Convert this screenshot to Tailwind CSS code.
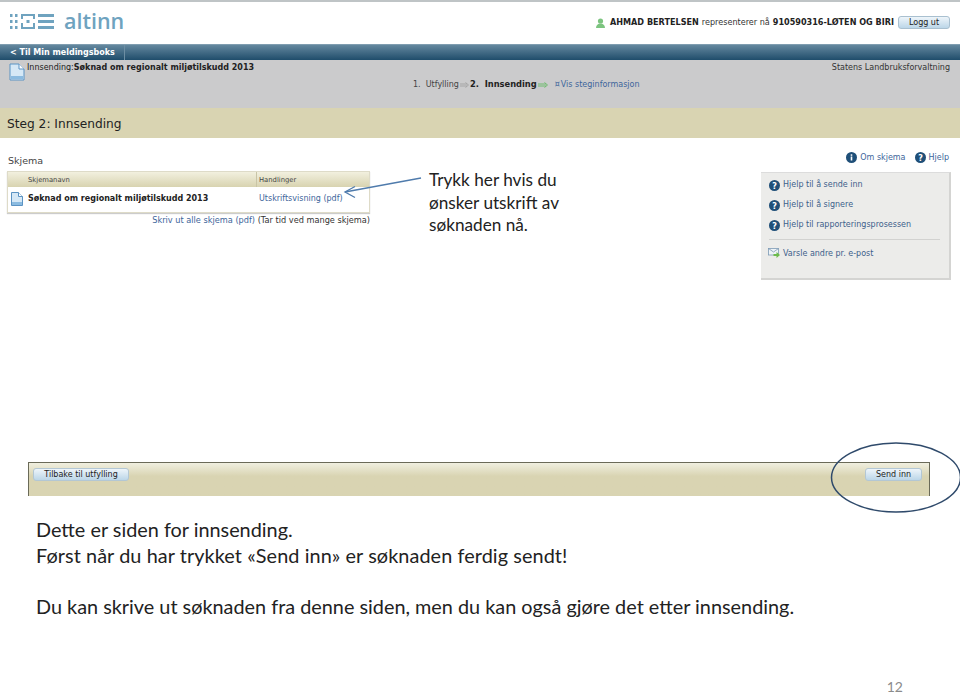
<!DOCTYPE html>
<html lang="no">
<head>
<meta charset="UTF-8">
<title>Innsending - Altinn</title>
<script src="https://cdn.jsdelivr.net/npm/@tailwindcss/browser@4"></script>
</head>
<body class="bg-white">
<div class="relative w-[960px] h-[694px] overflow-hidden bg-white font-['DejaVu_Sans',sans-serif] text-[#222]">

  <!-- top line -->
  <div class="h-[2px] bg-[#bfc4c6]"></div>

  <!-- header -->
  <div class="h-[42px] flex items-start justify-between pr-[10px]">
    <div class="flex items-center gap-[10px] pl-[10px] pt-[8px]">
      <svg width="44" height="18" viewBox="0 0 44 18" fill="#6fa3bf">
        <rect x="0" y="2" width="2.500" height="3"/><rect x="5" y="2" width="2.500" height="3"/>
        <rect x="0" y="8" width="2.500" height="3"/><rect x="5" y="8" width="2.500" height="3"/>
        <rect x="0" y="14" width="2.500" height="3"/><rect x="5" y="14" width="2.500" height="3"/>
        <path d="M11 2h14v2H11zM11 4h2v3h-2zM23 4h2v3h-2zM11 15h14v2H11zM11 11h2v4h-2zM23 11h2v4h-2zM16.500 8h3v3h-3z"/>
        <path d="M28 2h16v3H28zM28 8h16v3H28zM28 14h16v3H28z"/>
      </svg>
      <span class="font-['Open_Sans',sans-serif] font-semibold text-[21.5px] leading-none text-[#6fa3bf]">altinn</span>
    </div>
    <div class="flex items-center pt-[14px] text-[8.1px] leading-none">
      <svg class="mr-[4px]" width="11" height="10" viewBox="0 0 11 10" fill="#7cc47f"><circle cx="5.500" cy="3" r="2.600"/><path d="M1 10c0-3 2-4.500 4.500-4.500S10 7 10 10z"/></svg>
      <b>AHMAD BERTELSEN</b><span class="ml-[3px] text-[#333]">representerer nå</span><b class="ml-[3px]">910590316-LØTEN OG BIRI</b>
      <button class="ml-[4px] w-[52px] h-[13px] rounded-[3px] border border-[#a9c0d0] bg-gradient-to-b from-[#eef5fa] to-[#bcd6e8] text-[8px] leading-none text-[#222]">Logg ut</button>
    </div>
  </div>

  <!-- nav -->
  <div class="h-[16px] flex bg-gradient-to-b from-[#64889f] to-[#1f4d6b] border-t border-[#7f9db0]">
    <div class="w-[125px] pl-[10px] border-r border-[#6d8ea3] text-white text-[8px] font-bold leading-[15px]">&lt; Til Min meldingsboks</div>
  </div>

  <!-- form title area -->
  <div class="h-[48px] bg-[#cbcbcc] flex justify-between pr-[10px] pt-[2px] text-[8px] leading-[11px]">
    <div class="flex flex-col">
      <div class="flex pl-[9px]">
        <svg class="mr-[2px] mt-[1px]" width="16" height="18" viewBox="0 0 16 18"><path d="M1 1h9l5 5v11H1z" fill="#d5e8f6" stroke="#5b93c3"/><path d="M10 1v5h5" fill="#fff" stroke="#5b93c3"/><rect x="2" y="13" width="12" height="3" fill="#8bbbe0"/></svg>
        <span>Innsending:<b>Søknad om regionalt miljøtilskudd 2013</b></span>
      </div>
      <div class="flex items-center -mt-[2px] pl-[413px]">
        <span class="w-[47px] text-[#444] whitespace-nowrap">1.&nbsp; Utfylling</span>
        <svg class="mr-[1px]" width="9" height="6" viewBox="0 0 9 6" fill="none" stroke="#a5a5a5"><path d="M0 2h7M0 4h7M5.500 .5L8.500 3l-3 2.500"/></svg>
        <b class="text-[8.3px] whitespace-nowrap">2.&nbsp; Innsending</b>
        <svg class="ml-[1px]" width="10" height="6" viewBox="0 0 10 6" fill="none" stroke="#6dbb6d"><path d="M0 2h8M0 4h8M6.500 .5L9.500 3l-3 2.500"/></svg>
        <span class="ml-[7px] text-[#3d659b] whitespace-nowrap">¤<span class="ml-[1px]">Vis steginformasjon</span></span>
      </div>
    </div>
    <span class="text-[#333]">Statens Landbruksforvaltning</span>
  </div>

  <!-- step heading -->
  <div class="h-[30px] bg-[#d9d4b2] pl-[7px] text-[12.2px] leading-[32px] text-[#222]">Steg 2: Innsending</div>

  <!-- content -->
  <div class="h-[324px] flex">
    <div class="w-[363px] ml-[7px] pt-[17px]">
      <div class="text-[9.5px] leading-[12px] text-[#444] pl-[1px]">Skjema</div>
      <div class="mt-[4px] border border-[#dedbc8] shadow-[0_1px_1px_#ccc]">
        <div class="h-[15px] flex bg-gradient-to-b from-[#f2f0df] to-[#d8d3b0] text-[6.8px] leading-[16px] text-[#444]">
          <div class="w-[249px] pl-[20px] border-r border-[#c9c5a6]">Skjemanavn</div>
          <div class="pl-[2px]">Handlinger</div>
        </div>
        <div class="h-[25px] pb-[2px] flex items-center text-[8px]">
          <div class="w-[250px] pl-[3px] flex items-center">
            <svg class="mr-[5px]" width="12" height="14" viewBox="0 0 12 14"><path d="M.5.500h7l4 4v9H.5z" fill="#d5e8f6" stroke="#5b93c3"/><path d="M7.500.500v4h4" fill="#fff" stroke="#5b93c3"/><rect x="1" y="10" width="10" height="3" fill="#8bbbe0"/></svg>
            <b>Søknad om regionalt miljøtilskudd 2013</b>
          </div>
          <div class="pl-[1px] text-[#3d659b]">Utskriftsvisning (pdf)</div>
        </div>
      </div>
      <div class="mt-[2px] text-[8.2px] leading-[11px] text-right"><span class="text-[#3d659b]">Skriv ut alle skjema (pdf)</span> <span class="text-[#333]">(Tar tid ved mange skjema)</span></div>
    </div>

    <div class="ml-[59px] pt-[31px] w-[200px] font-['Lato',sans-serif] text-[17.2px] leading-[22.500px] text-[#222]">
      Trykk her hvis du<br>ønsker utskrift av<br>søknaden nå.
    </div>

    <div class="ml-[132px] w-[190px] pt-[14px]">
      <div class="flex justify-end items-center pr-[2px] text-[8px] leading-[11px] text-[#3d659b]">
        <svg class="mr-[3px]" width="11" height="11" viewBox="0 0 11 11"><circle cx="5.500" cy="5.500" r="5.500" fill="#1f4f78"/><rect x="4.700" y="4.500" width="1.600" height="4" fill="#fff"/><rect x="4.700" y="2.300" width="1.600" height="1.500" fill="#fff"/></svg>
        <span>Om skjema</span>
        <svg class="ml-[9px] mr-[3px]" width="11" height="11" viewBox="0 0 11 11"><circle cx="5.500" cy="5.500" r="5.500" fill="#1f4f78"/><text x="5.500" y="8.500" text-anchor="middle" font-size="8" font-weight="700" fill="#fff">?</text></svg>
        <span>Hjelp</span>
      </div>
      <div class="mt-[9px] h-[108px] bg-[#ececea] border-r-2 border-b-2 border-[#d4d4d2] border-t border-t-[#dcdcdc] pl-[8px] pr-[9px] pt-[2px] text-[8px] text-[#3d5f8a]">
        <div class="flex items-center h-[20px]">
          <svg class="mr-[3px]" width="11" height="11" viewBox="0 0 11 11"><circle cx="5.500" cy="5.500" r="5.500" fill="#1f4f78"/><text x="5.500" y="8.500" text-anchor="middle" font-size="8" font-weight="700" fill="#fff">?</text></svg>
          Hjelp til å sende inn
        </div>
        <div class="flex items-center h-[20px]">
          <svg class="mr-[3px]" width="11" height="11" viewBox="0 0 11 11"><circle cx="5.500" cy="5.500" r="5.500" fill="#1f4f78"/><text x="5.500" y="8.500" text-anchor="middle" font-size="8" font-weight="700" fill="#fff">?</text></svg>
          Hjelp til å signere
        </div>
        <div class="flex items-center h-[20px]">
          <svg class="mr-[3px]" width="11" height="11" viewBox="0 0 11 11"><circle cx="5.500" cy="5.500" r="5.500" fill="#1f4f78"/><text x="5.500" y="8.500" text-anchor="middle" font-size="8" font-weight="700" fill="#fff">?</text></svg>
          Hjelp til rapporteringsprosessen
        </div>
        <div class="mt-[4px] border-t border-[#d2d2d0] pt-[4px] flex items-center h-[25px]">
          <svg class="-ml-[1px] mr-[3px] -mt-[4px]" width="12" height="11" viewBox="0 0 12 11"><rect x=".5" y="1.500" width="10" height="6.500" fill="#eef3f7" stroke="#7d9bb5" stroke-width=".8"/><path d="M.5 1.500l5 3.500 5-3.500" fill="none" stroke="#7d9bb5" stroke-width=".8"/><path d="M5.500 7h3V5l3.500 3-3.500 3V9h-3z" fill="#6dbb4d"/></svg>
          Varsle andre pr. e-post
        </div>
      </div>
    </div>
  </div>

  <!-- bottom buttons bar -->
  <div class="ml-[28px] w-[902px] h-[34px] flex justify-between items-start pt-[5px] px-[4px] border-t border-x border-t-[#6a6a58] border-l-[#6a6a58] border-r-[#6a6a58] bg-gradient-to-b from-[#f0efe0] via-[#d9d4b2] via-40% to-[#d9d4b2]">
    <button class="w-[96px] h-[13px] rounded-[3px] border border-[#b3c7d4] bg-gradient-to-b from-[#eef5fa] to-[#bcd6e8] text-[8px] leading-none text-[#222]">Tilbake til utfylling</button>
    <button class="w-[57px] h-[13px] mr-[3px] rounded-[3px] border border-[#b3c7d4] bg-gradient-to-b from-[#eef5fa] to-[#bcd6e8] text-[8px] leading-none text-[#222]">Send inn</button>
  </div>

  <!-- explanation -->
  <div class="ml-[36px] mt-[21px] font-['Lato',sans-serif] text-[19.85px] leading-[25.500px] text-[#222]">
    <p>Dette er siden for innsending.</p>
    <p class="tracking-[0.08px]">Først når du har trykket «Send inn» er søknaden ferdig sendt!</p>
    <p class="mt-[25.500px]">Du kan skrive ut søknaden fra denne siden, men du kan også gjøre det etter innsending.</p>
  </div>

  <!-- page number -->
  <div class="absolute right-[57px] top-[678px] font-['Lato',sans-serif] text-[14px] leading-[18px] text-[#8b8b8b]">12</div>

  <!-- arrow and circle drawn over the page -->
  <svg class="absolute left-0 top-0 pointer-events-none" width="960" height="694" fill="none">
    <path d="M421 178 L345 192" stroke="#4f7bac" stroke-width="1.300"/>
    <path d="M355 186.500 L345 192 L355 197.500" stroke="#4f7bac" stroke-width="1.300"/>
    <ellipse cx="896" cy="477.500" rx="64.500" ry="34.500" stroke="#2f4a6b" stroke-width="1.500"/>
  </svg>
</div>
</body>
</html>
